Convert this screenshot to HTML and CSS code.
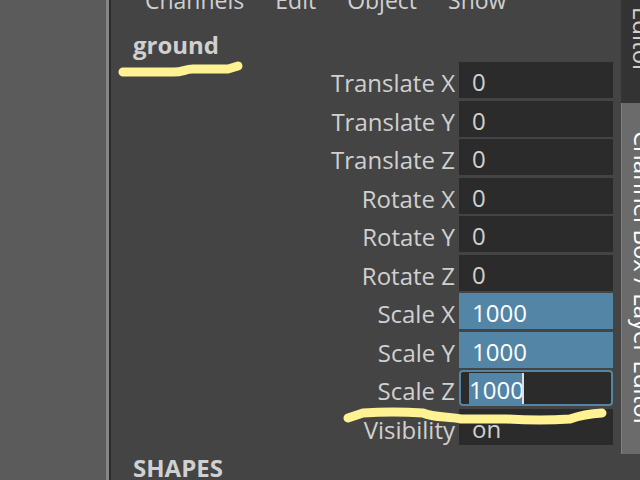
FILE: index.html
```html
<!DOCTYPE html>
<html lang="en">
<head>
    <meta charset="UTF-8">
    <meta name="viewport" content="width=device-width, initial-scale=1.0">
    <title>Channel Box</title>
    <link rel="stylesheet" href="styles.css">
</head>
<body>
    <div class="viewport"></div>
    <main class="panel">
        <nav class="menu">
            <button>Channels</button>
            <button>Edit</button>
            <button>Object</button>
            <button>Show</button>
        </nav>
        <h1 class="object-name">ground</h1>
        <form class="attributes">
            <div class="row"><label for="tx">Translate X</label><input id="tx" type="text" value="0"></div>
            <div class="row"><label for="ty">Translate Y</label><input id="ty" type="text" value="0"></div>
            <div class="row"><label for="tz">Translate Z</label><input id="tz" type="text" value="0"></div>
            <div class="row"><label for="rx">Rotate X</label><input id="rx" type="text" value="0"></div>
            <div class="row"><label for="ry">Rotate Y</label><input id="ry" type="text" value="0"></div>
            <div class="row"><label for="rz">Rotate Z</label><input id="rz" type="text" value="0"></div>
            <div class="row"><label for="sx">Scale X</label><input id="sx" class="selected" type="text" value="1000"></div>
            <div class="row"><label for="sy">Scale Y</label><input id="sy" class="selected" type="text" value="1000"></div>
            <div class="row"><label for="sz">Scale Z</label><input id="sz" class="editing" type="text" value="1000"><span class="caret"></span></div>
            <div class="row"><label for="vis">Visibility</label><input id="vis" type="text" value="on"></div>
        </form>
        <h2 class="shapes">SHAPES</h2>
        <svg class="marks" width="640" height="480" viewBox="0 0 640 480" aria-hidden="true">
            <path d="M123 72 H171 C182 73 184 69 193 69 H228 L238 66"/>
            <path d="M348 418 L363 413 Q393 411 423 413 C435 418 446 416 461 419 H507 Q540 421 570 419 Q584 414 602 413"/>
        </svg>
    </main>
    <aside class="tabs">
        <button class="tab">Editor</button>
        <button class="tab active">Channel Box / Layer Editor</button>
    </aside>
    <script>
        const field = document.getElementById('sz');
        field.focus();
        field.select();
    </script>
</body>
</html>
```
FILE: styles.css
```css
* {
    box-sizing: border-box;
}
body {
    margin: 0;
    height: 100vh;
    display: flex;
    overflow: hidden;
    background: #444;
    color: #d0d0d0;
    font-family: "Open Sans", "Noto Sans", sans-serif;
    font-size: 24px;
    line-height: 32px;
}
button {
    padding: 0;
    border: none;
    background: none;
    color: inherit;
    font: inherit;
}
.viewport {
    flex: 0 0 109px;
    background: #5b5b5b;
    border-right: 3px solid #858585;
}
.panel {
    flex: 1;
    min-width: 0;
    padding: 0 8px 0 22px;
    border-left: 2px solid #2b2b2b;
}
.menu {
    display: flex;
    align-items: flex-end;
    gap: 31px;
    height: 16px;
    padding-left: 12px;
    font-size: 23px;
}
.object-name,
.shapes {
    margin: 0;
    font-size: 24px;
    font-weight: 700;
    line-height: 32px;
}
.object-name {
    margin-top: 13px;
}
.attributes {
    display: grid;
    align-content: space-between;
    min-height: 383px;
    margin-top: 1px;
}
.row {
    position: relative;
    display: grid;
    grid-template-columns: 1fr 154px;
    column-gap: 4px;
    height: 36px;
}
.row label {
    padding-top: 5px;
    text-align: right;
}
.row input {
    width: 100%;
    height: 36px;
    padding: 3px 12px 0 13px;
    border: none;
    border-radius: 0;
    outline: none;
    background: #2b2b2b;
    color: #d0d0d0;
    font: inherit;
}
.row .selected {
    background: #5285a6;
    color: #fff;
}
.row .editing {
    padding: 3px 8px 0;
    border: 2px solid #5285a6;
    border-radius: 4px;
    color: #fff;
}
.editing::selection {
    background: #5285a6;
    color: #fff;
}
.caret {
    position: absolute;
    right: 89px;
    top: 3px;
    width: 2px;
    height: 31px;
    background: #ddd;
}
.shapes {
    margin-top: 7px;
}
.marks {
    position: absolute;
    left: 0;
    top: 0;
    fill: none;
    stroke: #fff293;
    stroke-width: 9;
    stroke-linecap: round;
    stroke-linejoin: round;
    pointer-events: none;
}
.tabs {
    flex: 0 0 19px;
    overflow: hidden;
}
.tab {
    display: block;
    width: 42px;
    height: 103px;
    padding-top: 7px;
    background: #333;
    writing-mode: vertical-rl;
    text-align: left;
    white-space: nowrap;
}
.tab.active {
    height: 351px;
    padding-top: 28px;
    border-left: 1px solid #808080;
    background: #6b6b6b;
    color: #fff;
}
```
